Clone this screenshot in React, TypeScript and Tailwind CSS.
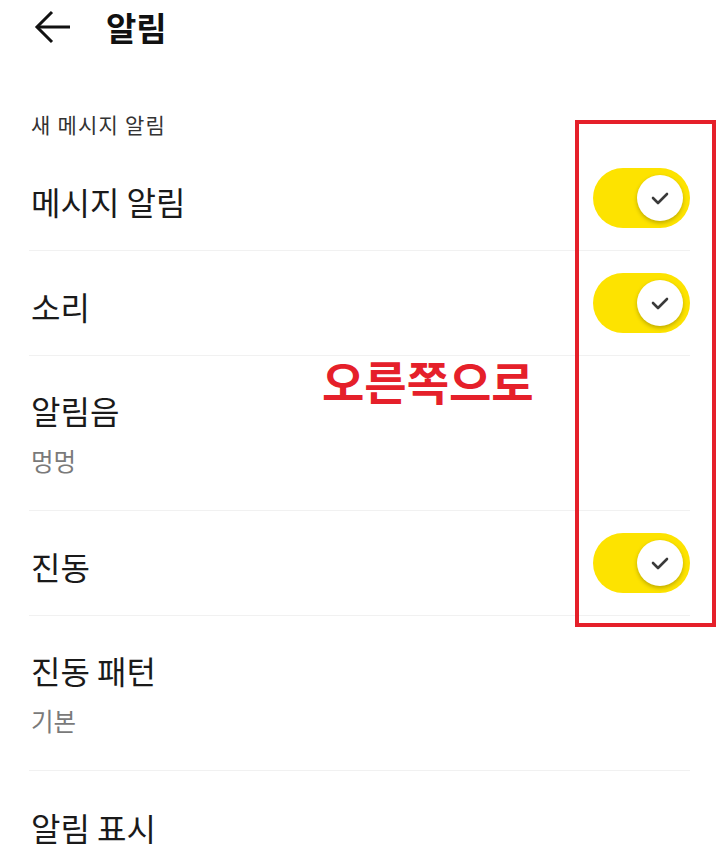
import type { ReactNode } from 'react'

const font = { fontFamily: '"Noto Sans CJK KR", "Noto Sans", sans-serif' }

function BackArrow() {
  return (
    <svg width="38" height="34" viewBox="0 0 38 34" fill="none">
      <path d="M4 17H37" stroke="#111" strokeWidth="3" strokeLinecap="butt" />
      <path d="M19 2L4 17L19 32" stroke="#111" strokeWidth="3" strokeLinecap="butt" strokeLinejoin="miter" />
    </svg>
  )
}

function Toggle() {
  return (
    <div className="flex h-[60px] w-[97px] items-center justify-end rounded-full bg-[#fde300] pr-[7px]">
      <div className="flex h-[46px] w-[46px] items-center justify-center rounded-full bg-white shadow-[0_2px_4px_rgba(0,0,0,0.25)]">
        <svg width="18" height="14" viewBox="0 0 18 14" fill="none">
          <path d="M2 7L7 12L16 3" stroke="#3a3a3a" strokeWidth="2.6" strokeLinecap="round" strokeLinejoin="round" />
        </svg>
      </div>
    </div>
  )
}

function Row({ title, right, last }: { title: string; right?: ReactNode; last?: boolean }) {
  return (
    <div className={`flex h-[105px] items-center justify-between ${last ? '' : 'border-b border-[#f1f1f1]'}`}>
      <span className="pl-[2px] pt-[6px] text-[32px] leading-[38px] text-[#1a1a1a]">{title}</span>
      {right}
    </div>
  )
}

function TwoLineRow({ title, sub }: { title: string; sub: string }) {
  return (
    <div className="flex h-[155px] flex-col justify-center gap-[17px] border-b border-[#f1f1f1] pl-[2px]">
      <span className="text-[32px] leading-[38px] text-[#1a1a1a]">{title}</span>
      <span className="text-[24.5px] leading-[30px] text-[#7a7a7a]">{sub}</span>
    </div>
  )
}

export default function App() {
  return (
    <div className="relative h-[856px] w-[720px] overflow-hidden bg-white" style={font}>
      <header className="flex h-[53px] items-center">
        <div className="ml-[33px] w-[73px]">
          <BackArrow />
        </div>
        <h1 className="text-[33px] font-bold leading-[38px] text-[#111]">알림</h1>
      </header>

      <div className="pl-[31px] pt-[60px] pb-[11px] text-[21px] leading-[22px] tracking-[1.2px] text-[#333]">
        새 메시지 알림
      </div>

      <div className="pl-[29px] pr-[30px]">
        <Row title="메시지 알림" right={<Toggle />} />
        <Row title="소리" right={<Toggle />} />
        <TwoLineRow title="알림음" sub="멍멍" />
        <Row title="진동" right={<Toggle />} />
        <TwoLineRow title="진동 패턴" sub="기본" />
        <Row title="알림 표시" last />
      </div>

      <div className="absolute left-[575px] top-[120px] h-[507px] w-[141px] border-[4px] border-[#e5202a]" />
      <div className="absolute left-[322px] top-[351px] text-[46px] font-bold leading-[58px] text-[#e5202a]">
        오른쪽으로
      </div>
    </div>
  )
}
